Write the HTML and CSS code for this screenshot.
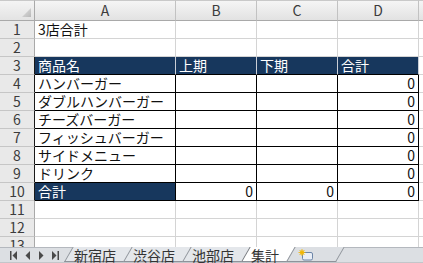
FILE: index.html
```html
<!DOCTYPE html>
<html lang="ja">
<head>
  <meta charset="UTF-8">
  <title>集計</title>
  <link rel="stylesheet" href="styles.css">
</head>
<body>
  <div class="book">
    <div class="grid">
      <div class="corner"></div>
      <div class="ch">A</div>
      <div class="ch">B</div>
      <div class="ch">C</div>
      <div class="ch">D</div>
      <div class="ch"></div>

      <div class="rh">1</div>
      <div class="c">3店合計</div><div class="c"></div><div class="c"></div><div class="c"></div><div class="c"></div>

      <div class="rh">2</div>
      <div class="c"></div><div class="c"></div><div class="c"></div><div class="c"></div><div class="c"></div>

      <div class="rh edge">3</div>
      <div class="c dk">商品名</div><div class="c dk">上期</div><div class="c dk">下期</div><div class="c dk">合計</div><div class="c"></div>

      <div class="rh edge">4</div>
      <div class="c t">ハンバーガー</div><div class="c t"></div><div class="c t"></div><div class="c t num">0</div><div class="c"></div>

      <div class="rh edge">5</div>
      <div class="c t">ダブルハンバーガー</div><div class="c t"></div><div class="c t"></div><div class="c t num">0</div><div class="c"></div>

      <div class="rh edge">6</div>
      <div class="c t">チーズバーガー</div><div class="c t"></div><div class="c t"></div><div class="c t num">0</div><div class="c"></div>

      <div class="rh edge">7</div>
      <div class="c t">フィッシュバーガー</div><div class="c t"></div><div class="c t"></div><div class="c t num">0</div><div class="c"></div>

      <div class="rh edge">8</div>
      <div class="c t">サイドメニュー</div><div class="c t"></div><div class="c t"></div><div class="c t num">0</div><div class="c"></div>

      <div class="rh edge">9</div>
      <div class="c t">ドリンク</div><div class="c t"></div><div class="c t"></div><div class="c t num">0</div><div class="c"></div>

      <div class="rh edge">10</div>
      <div class="c t dk">合計</div><div class="c t num">0</div><div class="c t num">0</div><div class="c t num">0</div><div class="c"></div>

      <div class="rh">11</div>
      <div class="c"></div><div class="c"></div><div class="c"></div><div class="c"></div><div class="c"></div>

      <div class="rh">12</div>
      <div class="c"></div><div class="c"></div><div class="c"></div><div class="c"></div><div class="c"></div>

      <div class="rh last">13</div>
      <div class="c"></div><div class="c"></div><div class="c"></div><div class="c"></div><div class="c"></div>
    </div>

    <div class="tabbar">
      <div class="nav">
        <svg width="8" height="9" viewBox="0 0 8 9"><rect x="0" y="0" width="1.5" height="9" fill="#4a4a4a"/><path d="M7 0 L2.5 4.5 L7 9 Z" fill="#4a4a4a"/></svg>
        <svg width="6" height="9" viewBox="0 0 6 9"><path d="M5 0 L0.5 4.5 L5 9 Z" fill="#4a4a4a"/></svg>
        <svg width="6" height="9" viewBox="0 0 6 9"><path d="M1 0 L5.5 4.5 L1 9 Z" fill="#4a4a4a"/></svg>
        <svg width="8" height="9" viewBox="0 0 8 9"><path d="M1 0 L5.5 4.5 L1 9 Z" fill="#4a4a4a"/><rect x="6.5" y="0" width="1.5" height="9" fill="#4a4a4a"/></svg>
      </div>
      <div class="tab">新宿店</div>
      <div class="tab">渋谷店</div>
      <div class="tab">池部店</div>
      <div class="tab active">集計</div>
      <div class="tab add">
        <svg width="16" height="12" viewBox="0 0 16 12">
          <rect x="4.5" y="3.5" width="10" height="7.5" rx="1.5" fill="#e9eef6" stroke="#6d86a8"/>
          <circle cx="4" cy="3.5" r="2.2" fill="#f4c531"/>
          <path d="M4 0 V7 M0.5 3.5 H7.5 M1.5 1 L6.5 6 M6.5 1 L1.5 6" stroke="#f0b400" stroke-width="0.8"/>
        </svg>
      </div>
    </div>
  </div>
</body>
</html>
```

FILE: styles.css
```css
body {
  margin: 0;
  background: #ffffff;
  font-family: "Noto Sans CJK JP", "Noto Sans", sans-serif;
  overflow: hidden;
}

.book {
  width: 423px;
  height: 263px;
  display: flex;
  flex-direction: column;
  overflow: hidden;
}

.grid {
  display: grid;
  grid-template-columns: 35px 141px 81px 81px 81px 1fr;
  grid-template-rows: 21px;
  grid-auto-rows: 18px;
  height: 247px;
  overflow: hidden;
  flex-shrink: 0;
}

.grid > div {
  box-sizing: border-box;
  font-size: 14px;
  line-height: 17px;
  white-space: nowrap;
}

.corner {
  position: relative;
  background: linear-gradient(#f4f4f4, #e3e3e3);
  border-top: 1px solid #c9c9c9;
  border-right: 1px solid #a9a9a9;
  border-bottom: 1px solid #a9a9a9;
}

.corner::after {
  content: "";
  position: absolute;
  right: 3px;
  bottom: 3px;
  width: 9px;
  height: 9px;
  background: linear-gradient(135deg, #e3e3e3, #b8b8b8);
  clip-path: polygon(100% 0, 100% 100%, 0 100%);
}

.ch {
  background: linear-gradient(#f5f5f5, #e2e2e2);
  border-top: 1px solid #c9c9c9;
  border-right: 1px solid #c2c2c2;
  border-bottom: 1px solid #a9a9a9;
  color: #3c3c3c;
  text-align: center;
  line-height: 19px !important;
}

.rh {
  background: #e9e9e9;
  border-right: 1px solid #a9a9a9;
  border-bottom: 1px solid #c6c6c6;
  color: #3c3c3c;
  text-align: center;
}

.rh.edge {
  border-right-color: #1a1a1a;
}

.rh.last {
  overflow: hidden;
}

.c {
  border-right: 1px solid #d4d4d4;
  border-bottom: 1px solid #d4d4d4;
  padding: 0 3px;
  color: #111;
}

.c.t {
  border-right-color: #000;
  border-bottom-color: #000;
}

.c.dk {
  background: #17375d;
  color: #ffffff;
}

.c.dk:not(.t) {
  border-right-color: #c9ced6;
  border-bottom-color: #000;
}

.num {
  text-align: right;
}

.tabbar {
  flex: 1;
  display: flex;
  align-items: stretch;
  background: #dcdfe3;
  border-top: 1px solid #b4b8be;
  border-bottom: 2px solid #c3c6ca;
}

.nav {
  width: 64px;
  display: flex;
  align-items: center;
  gap: 7px;
  padding-left: 10px;
  box-sizing: border-box;
}

.tab {
  position: relative;
  z-index: 0;
  padding: 0 7px 0 10px;
  font-size: 14px;
  line-height: 14px;
  color: #333;
  display: flex;
  align-items: center;
}

.tab::before {
  content: "";
  position: absolute;
  z-index: -1;
  top: -1px;
  bottom: 0;
  left: 0;
  right: 0;
  background: #e4e7eb;
  border-left: 1px solid #8e939a;
  border-bottom: 1px solid #8e939a;
  transform: skewX(-30deg);
  transform-origin: bottom left;
}

.tab.active::before {
  background: #ffffff;
  border-left-color: #6f7379;
}

.tab.add {
  padding: 0 22px 0 12px;
}

.tab.add::before {
  background: #dcdfe3;
  border-right: 1px solid #8e939a;
}
```
